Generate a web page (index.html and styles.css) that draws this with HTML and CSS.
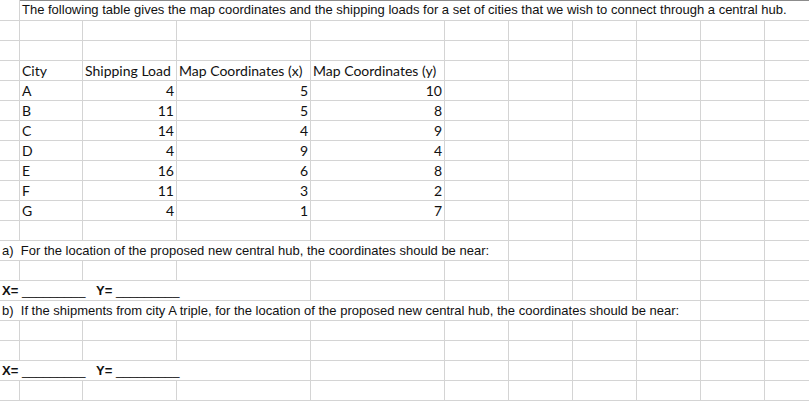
FILE: index.html
```html
<!DOCTYPE html>
<html>
<head>
<meta charset="utf-8">
<link rel="stylesheet" href="styles.css">
</head>
<body>
<div class="sheet">
  <!-- row 1 -->
  <div class="c first"></div>
  <div class="c title s10">The following table gives the map coordinates and the shipping loads for a set of cities that we wish to connect through a central hub.</div>
  <!-- row 2 -->
  <div class="c"></div><div class="c"></div><div class="c"></div><div class="c"></div><div class="c"></div><div class="c"></div><div class="c"></div><div class="c"></div><div class="c"></div><div class="c"></div><div class="c"></div>
  <!-- row 3 -->
  <div class="c"></div><div class="c"></div><div class="c"></div><div class="c"></div><div class="c"></div><div class="c"></div><div class="c"></div><div class="c"></div><div class="c"></div><div class="c"></div><div class="c"></div>
  <!-- row 4 header -->
  <div class="c"></div><div class="c t">City</div><div class="c t">Shipping Load</div><div class="c t">Map Coordinates (x)</div><div class="c t">Map Coordinates (y)</div><div class="c"></div><div class="c"></div><div class="c"></div><div class="c"></div><div class="c"></div><div class="c"></div>
  <!-- data -->
  <div class="c"></div><div class="c t">A</div><div class="c n">4</div><div class="c n">5</div><div class="c n">10</div><div class="c"></div><div class="c"></div><div class="c"></div><div class="c"></div><div class="c"></div><div class="c"></div>
  <div class="c"></div><div class="c t">B</div><div class="c n">11</div><div class="c n">5</div><div class="c n">8</div><div class="c"></div><div class="c"></div><div class="c"></div><div class="c"></div><div class="c"></div><div class="c"></div>
  <div class="c"></div><div class="c t">C</div><div class="c n">14</div><div class="c n">4</div><div class="c n">9</div><div class="c"></div><div class="c"></div><div class="c"></div><div class="c"></div><div class="c"></div><div class="c"></div>
  <div class="c"></div><div class="c t">D</div><div class="c n">4</div><div class="c n">9</div><div class="c n">4</div><div class="c"></div><div class="c"></div><div class="c"></div><div class="c"></div><div class="c"></div><div class="c"></div>
  <div class="c"></div><div class="c t">E</div><div class="c n">16</div><div class="c n">6</div><div class="c n">8</div><div class="c"></div><div class="c"></div><div class="c"></div><div class="c"></div><div class="c"></div><div class="c"></div>
  <div class="c"></div><div class="c t">F</div><div class="c n">11</div><div class="c n">3</div><div class="c n">2</div><div class="c"></div><div class="c"></div><div class="c"></div><div class="c"></div><div class="c"></div><div class="c"></div>
  <div class="c"></div><div class="c t">G</div><div class="c n">4</div><div class="c n">1</div><div class="c n">7</div><div class="c"></div><div class="c"></div><div class="c"></div><div class="c"></div><div class="c"></div><div class="c"></div>
  <!-- row 12 -->
  <div class="c"></div><div class="c"></div><div class="c"></div><div class="c"></div><div class="c"></div><div class="c"></div><div class="c"></div><div class="c"></div><div class="c"></div><div class="c"></div><div class="c"></div>
  <!-- row 13 a) -->
  <div class="c q s6">a)  For the location of the proposed new central hub, the coordinates should be near:</div><div class="c"></div><div class="c"></div><div class="c"></div><div class="c"></div><div class="c"></div>
  <!-- row 14 -->
  <div class="c"></div><div class="c"></div><div class="c"></div><div class="c"></div><div class="c"></div><div class="c"></div><div class="c"></div><div class="c"></div><div class="c"></div><div class="c"></div><div class="c"></div>
  <!-- row 15 X= -->
  <div class="c q s4"><b>X=</b> <span class="blank">_________</span>   <b>Y=</b> <span class="blank">_________</span></div><div class="c"></div><div class="c"></div><div class="c"></div><div class="c"></div><div class="c"></div><div class="c"></div><div class="c"></div>
  <!-- row 16 b) -->
  <div class="c q s9">b)  If the shipments from city A triple, for the location of the proposed new central hub, the coordinates should be near:</div><div class="c"></div><div class="c"></div>
  <!-- row 17 -->
  <div class="c"></div><div class="c"></div><div class="c"></div><div class="c"></div><div class="c"></div><div class="c"></div><div class="c"></div><div class="c"></div><div class="c"></div><div class="c"></div><div class="c"></div>
  <!-- row 18 -->
  <div class="c"></div><div class="c"></div><div class="c"></div><div class="c"></div><div class="c"></div><div class="c"></div><div class="c"></div><div class="c"></div><div class="c"></div><div class="c"></div><div class="c"></div>
  <!-- row 19 X= -->
  <div class="c q s4"><b>X=</b> <span class="blank">_________</span>   <b>Y=</b> <span class="blank">_________</span></div><div class="c"></div><div class="c"></div><div class="c"></div><div class="c"></div><div class="c"></div><div class="c"></div><div class="c"></div>
  <!-- row 20 -->
  <div class="c"></div><div class="c"></div><div class="c"></div><div class="c"></div><div class="c"></div><div class="c"></div><div class="c"></div><div class="c"></div><div class="c"></div><div class="c"></div><div class="c"></div>
</div>
</body>
</html>
```
FILE: styles.css
```css
html, body {
  margin: 0;
  padding: 0;
  background: #ffffff;
  overflow: hidden;
}
.sheet {
  display: grid;
  grid-template-columns: 20px 63px 94px 134px 134px 64px 64px 64px 64px 64px 64px;
  grid-template-rows: 21px repeat(19, 20px);
  width: 829px;
  color: #111;
}
.c {
  box-sizing: border-box;
  border-right: 1px solid #d4d4d4;
  border-bottom: 1px solid #d4d4d4;
  white-space: pre;
  overflow: visible;
  min-width: 0;
  font-family: "Liberation Sans", Arial, sans-serif;
  font-size: 13px;
  line-height: 19px;
}
.title {
  border-top: 1px solid #8c8c8c;
  border-right: none;
  padding-left: 2px;
  line-height: 18px;
}
.s10 { grid-column: span 10; }
.s9 { grid-column: span 9; }
.s6 { grid-column: span 6; }
.s4 { grid-column: span 4; }
.t, .n {
  font-family: Lato, "Open Sans", sans-serif;
  font-size: 14px;
  line-height: 20px;
}
.t { padding-left: 2px; }
.n { text-align: right; padding-right: 2px; }
.q { padding-left: 2px; line-height: 20px; }
.q b { font-weight: bold; }
.blank { letter-spacing: -0.2px; }
```
